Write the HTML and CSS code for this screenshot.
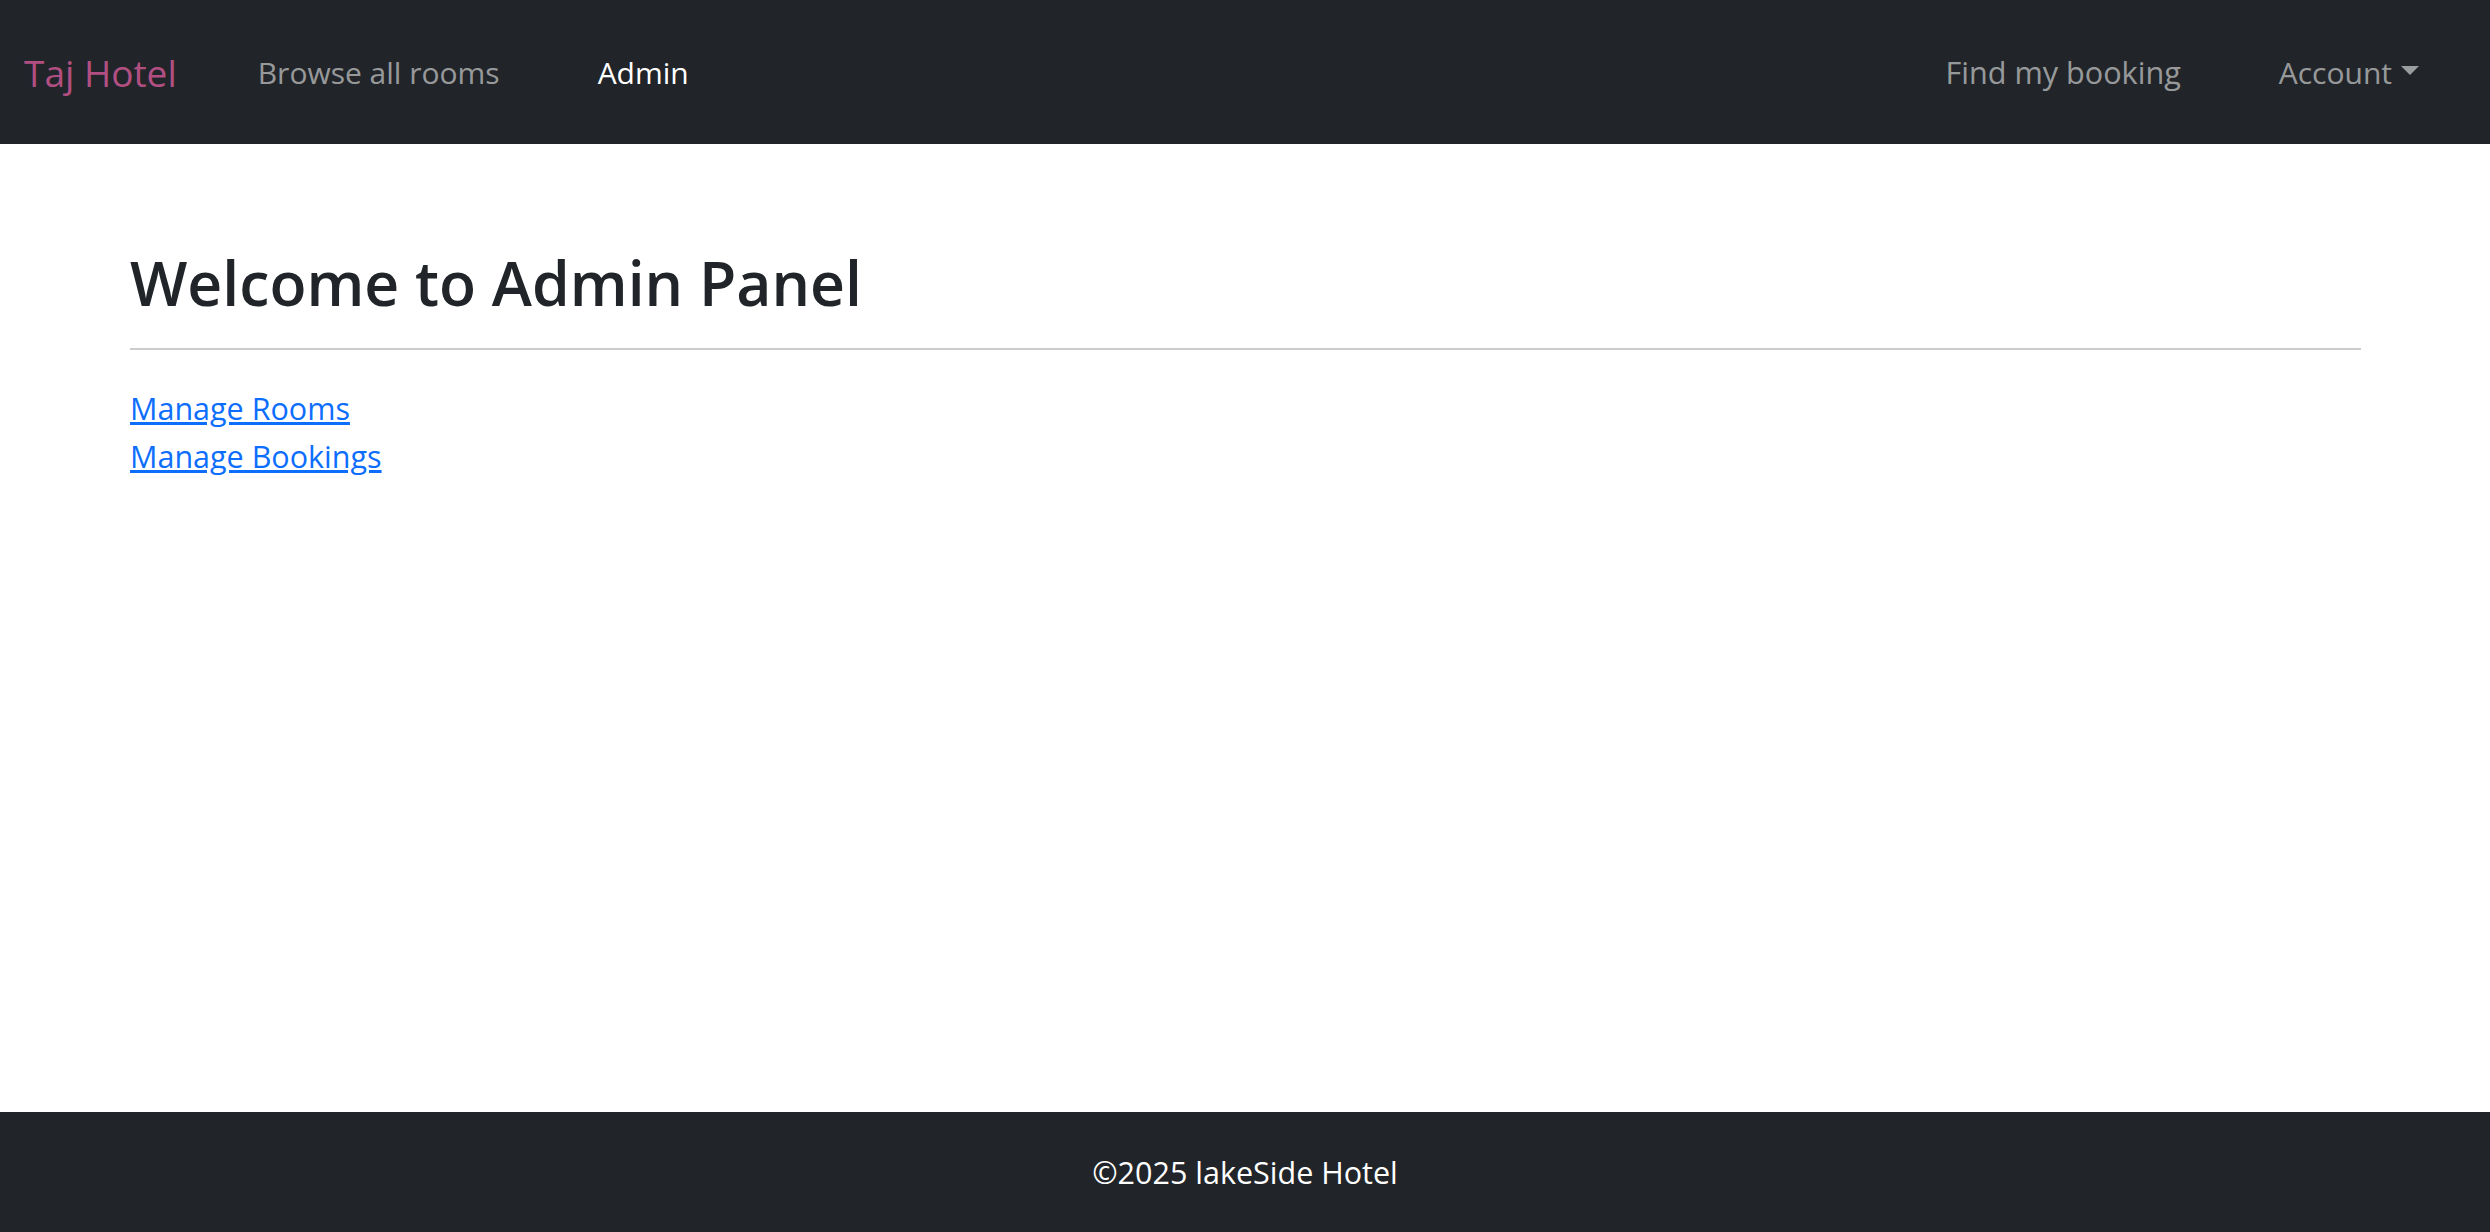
FILE: index.html
```html
<!DOCTYPE html>
<html lang="en">
<head>
<meta charset="utf-8">
<title>Taj Hotel - Admin</title>
<link rel="stylesheet" href="styles.css">
</head>
<body>
<div class="page">
  <nav class="navbar">
    <a class="brand" href="#">Taj Hotel</a>
    <ul class="nav-left">
      <li><a class="nav-link" href="#">Browse all rooms</a></li>
      <li><a class="nav-link active" href="#">Admin</a></li>
    </ul>
    <ul class="nav-right">
      <li><a class="nav-link" href="#">Find my booking</a></li>
      <li><a class="nav-link dropdown" href="#">Account<span class="caret"></span></a></li>
    </ul>
  </nav>
  <main class="container">
    <h1 class="title">Welcome to Admin Panel</h1>
    <hr class="rule">
    <a class="admin-link" href="#">Manage Rooms</a>
    <a class="admin-link" href="#">Manage Bookings</a>
  </main>
  <footer class="footer">
    <p>©2025 lakeSide Hotel</p>
  </footer>
</div>
</body>
</html>
```

FILE: styles.css
```css
* { box-sizing: border-box; }
html, body { margin: 0; padding: 0; }
body {
  font-family: "Open Sans", "Noto Sans", sans-serif;
  color: #212529;
  background: #fff;
}
.page {
  min-height: 1232px;
  display: flex;
  flex-direction: column;
}
.navbar {
  height: 144px;
  background: #212529;
  display: flex;
  align-items: center;
  padding: 0 71px 0 24px;
}
.brand {
  font-size: 37px;
  color: #b24f82;
  text-decoration: none;
  margin-right: 32px;
}
.nav-left, .nav-right {
  list-style: none;
  margin: 0;
  padding: 0;
  display: flex;
  align-items: center;
}
.nav-right { margin-left: auto; }
.nav-link {
  display: flex;
  align-items: center;
  font-size: 30px;
  color: rgba(255,255,255,.55);
  text-decoration: none;
  padding: 0 49px;
}
.nav-right li:last-child .nav-link { padding-right: 0; }
.nav-right li:first-child .nav-link { font-size: 30.6px; }
.nav-link.active { color: #fff; }
.caret {
  display: inline-block;
  margin-left: 9px;
  margin-top: -4px;
  border-top: 9px solid rgba(255,255,255,.55);
  border-left: 9px solid transparent;
  border-right: 9px solid transparent;
}
.container {
  flex: 1;
  padding: 0 129px 0 130px;
}
.title {
  font-size: 60.7px;
  font-weight: 600;
  margin: 0;
  padding-top: 104px;
  line-height: 70px;
}
.rule {
  border: 0;
  border-top: 2px solid #ccc;
  margin: 30px 0 34px;
}
.admin-link {
  display: block;
  width: max-content;
  font-size: 30.5px;
  line-height: 48px;
  color: #0d6efd;
}
.footer {
  height: 120px;
  background: #212529;
  color: #fff;
  display: flex;
  align-items: center;
  justify-content: center;
}
.footer p { margin: 0; font-size: 30.5px; }
```
